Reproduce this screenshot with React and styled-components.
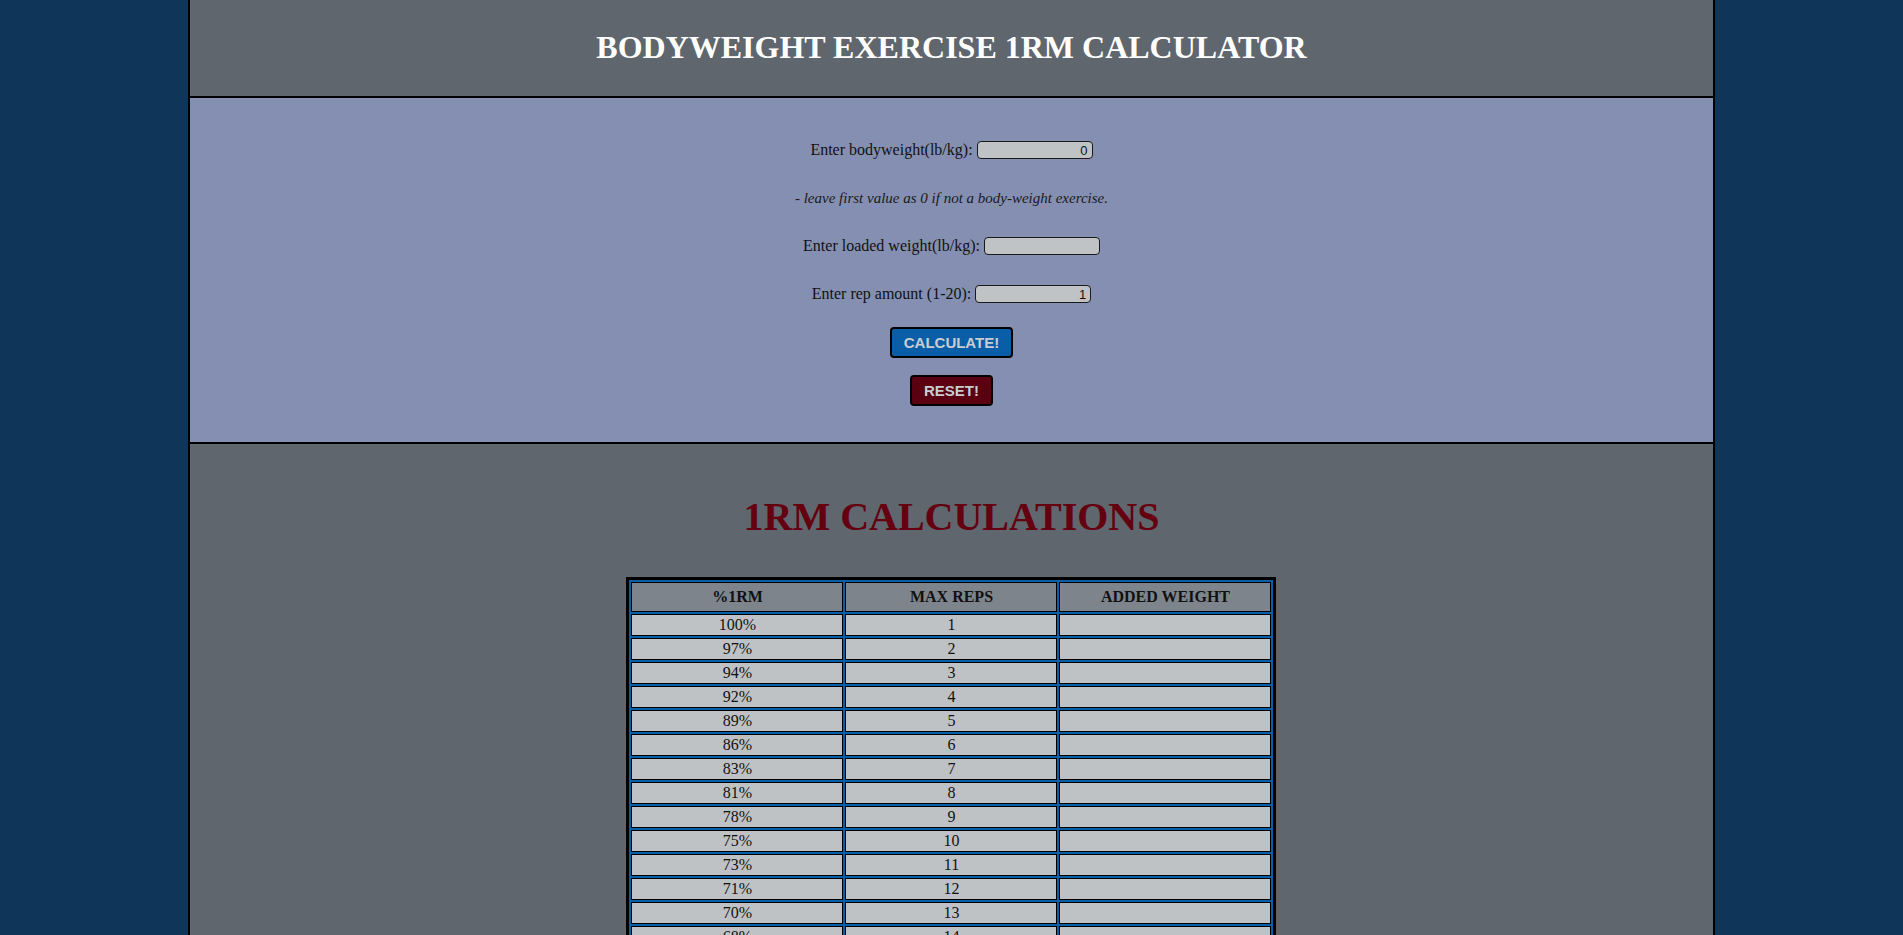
import React from "react"
import styled, { createGlobalStyle } from "styled-components"

const GlobalStyle = createGlobalStyle`
    body {
        margin: 0;
        background-color: #0f3558;
        font-family: "Liberation Serif", "Times New Roman", serif;
    }
`

const Page = styled.div`
    width: 80%;
    margin: 0 auto;
    border-left: 2px solid black;
    border-right: 2px solid black;
`

const Header = styled.header`
    height: 96px;
    display: flex;
    align-items: center;
    justify-content: center;
    background-color: #5f666d;
    border-bottom: 2px solid black;
`

const Title = styled.h1`
    margin: 0;
    padding-bottom: 2px;
    color: white;
    font-size: 32px;
    line-height: 37px;
    font-weight: bold;
`

const Form = styled.section`
    display: flex;
    flex-direction: column;
    align-items: center;
    gap: 16px;
    padding: 36px 0;
    background-color: #858fb1;
    border-bottom: 2px solid black;
`

const Row = styled.div`
    height: 32px;
    display: flex;
    align-items: center;
    justify-content: center;
    gap: 4px;
    font-size: 16px;
    color: #111;
`

const Note = styled.p`
    margin: 0;
    font-size: 15px;
    font-style: italic;
    color: #1a1a1a;
`

const Input = styled.input`
    box-sizing: border-box;
    width: 116px;
    height: 18px;
    padding: 0 4px;
    border: 1px solid #1a1a1a;
    border-radius: 4px;
    background-color: #c0c3c6;
    font-family: "Liberation Sans", Arial, sans-serif;
    font-size: 13px;
    text-align: right;
    color: #111;
    outline: none;
    &::-webkit-inner-spin-button,
    &::-webkit-outer-spin-button {
        -webkit-appearance: none;
        margin: 0;
    }
`

const Button = styled.button`
    box-sizing: border-box;
    height: 31px;
    padding: 0 12px;
    border: 2px solid black;
    border-radius: 4px;
    background-color: ${props => props.$bg};
    color: #c9cdd1;
    font-family: "Liberation Sans", Arial, sans-serif;
    font-size: 15px;
    font-weight: bold;
    cursor: pointer;
`

const Results = styled.section`
    display: flex;
    flex-direction: column;
    align-items: center;
    padding: 50px 0 60px;
    background-color: #5f666d;
`

const ResultsTitle = styled.h2`
    margin: 0 0 37px;
    color: #64000f;
    font-size: 40px;
    line-height: 46px;
    font-weight: bold;
`

const Table = styled.table`
    width: 650px;
    table-layout: fixed;
    border: 3px solid black;
    border-spacing: 2px;
    background-color: #0a5ea8;
`

const Th = styled.th`
    padding: 5px 1px;
    border: 1px solid black;
    background-color: #7e848c;
    font-size: 16px;
    line-height: 18px;
    color: #111;
`

const Td = styled.td`
    padding: 1px;
    border: 1px solid black;
    background-color: #bfc2c5;
    text-align: center;
    font-size: 16px;
    line-height: 18px;
    height: 18px;
    color: #111;
`

const percents = [100, 97, 94, 92, 89, 86, 83, 81, 78, 75, 73, 71, 70, 68, 67, 65, 64, 63, 61, 60]

export default function App() {
    return (
        <>
            <GlobalStyle />
            <Page>
                <Header>
                    <Title>BODYWEIGHT EXERCISE 1RM CALCULATOR</Title>
                </Header>
                <Form>
                    <Row>
                        <label>Enter bodyweight(lb/kg):</label>
                        <Input type="number" defaultValue="0" />
                    </Row>
                    <Row>
                        <Note>- leave first value as 0 if not a body-weight exercise.</Note>
                    </Row>
                    <Row>
                        <label>Enter loaded weight(lb/kg):</label>
                        <Input type="number" />
                    </Row>
                    <Row>
                        <label>Enter rep amount (1-20):</label>
                        <Input type="number" defaultValue="1" />
                    </Row>
                    <Row>
                        <Button $bg="#0a5ea8">CALCULATE!</Button>
                    </Row>
                    <Row>
                        <Button $bg="#5a0011">RESET!</Button>
                    </Row>
                </Form>
                <Results>
                    <ResultsTitle>1RM CALCULATIONS</ResultsTitle>
                    <Table>
                        <thead>
                            <tr>
                                <Th>%1RM</Th>
                                <Th>MAX REPS</Th>
                                <Th>ADDED WEIGHT</Th>
                            </tr>
                        </thead>
                        <tbody>
                            {percents.map((p, i) => (
                                <tr key={p}>
                                    <Td>{p}%</Td>
                                    <Td>{i + 1}</Td>
                                    <Td></Td>
                                </tr>
                            ))}
                        </tbody>
                    </Table>
                </Results>
            </Page>
        </>
    )
}
